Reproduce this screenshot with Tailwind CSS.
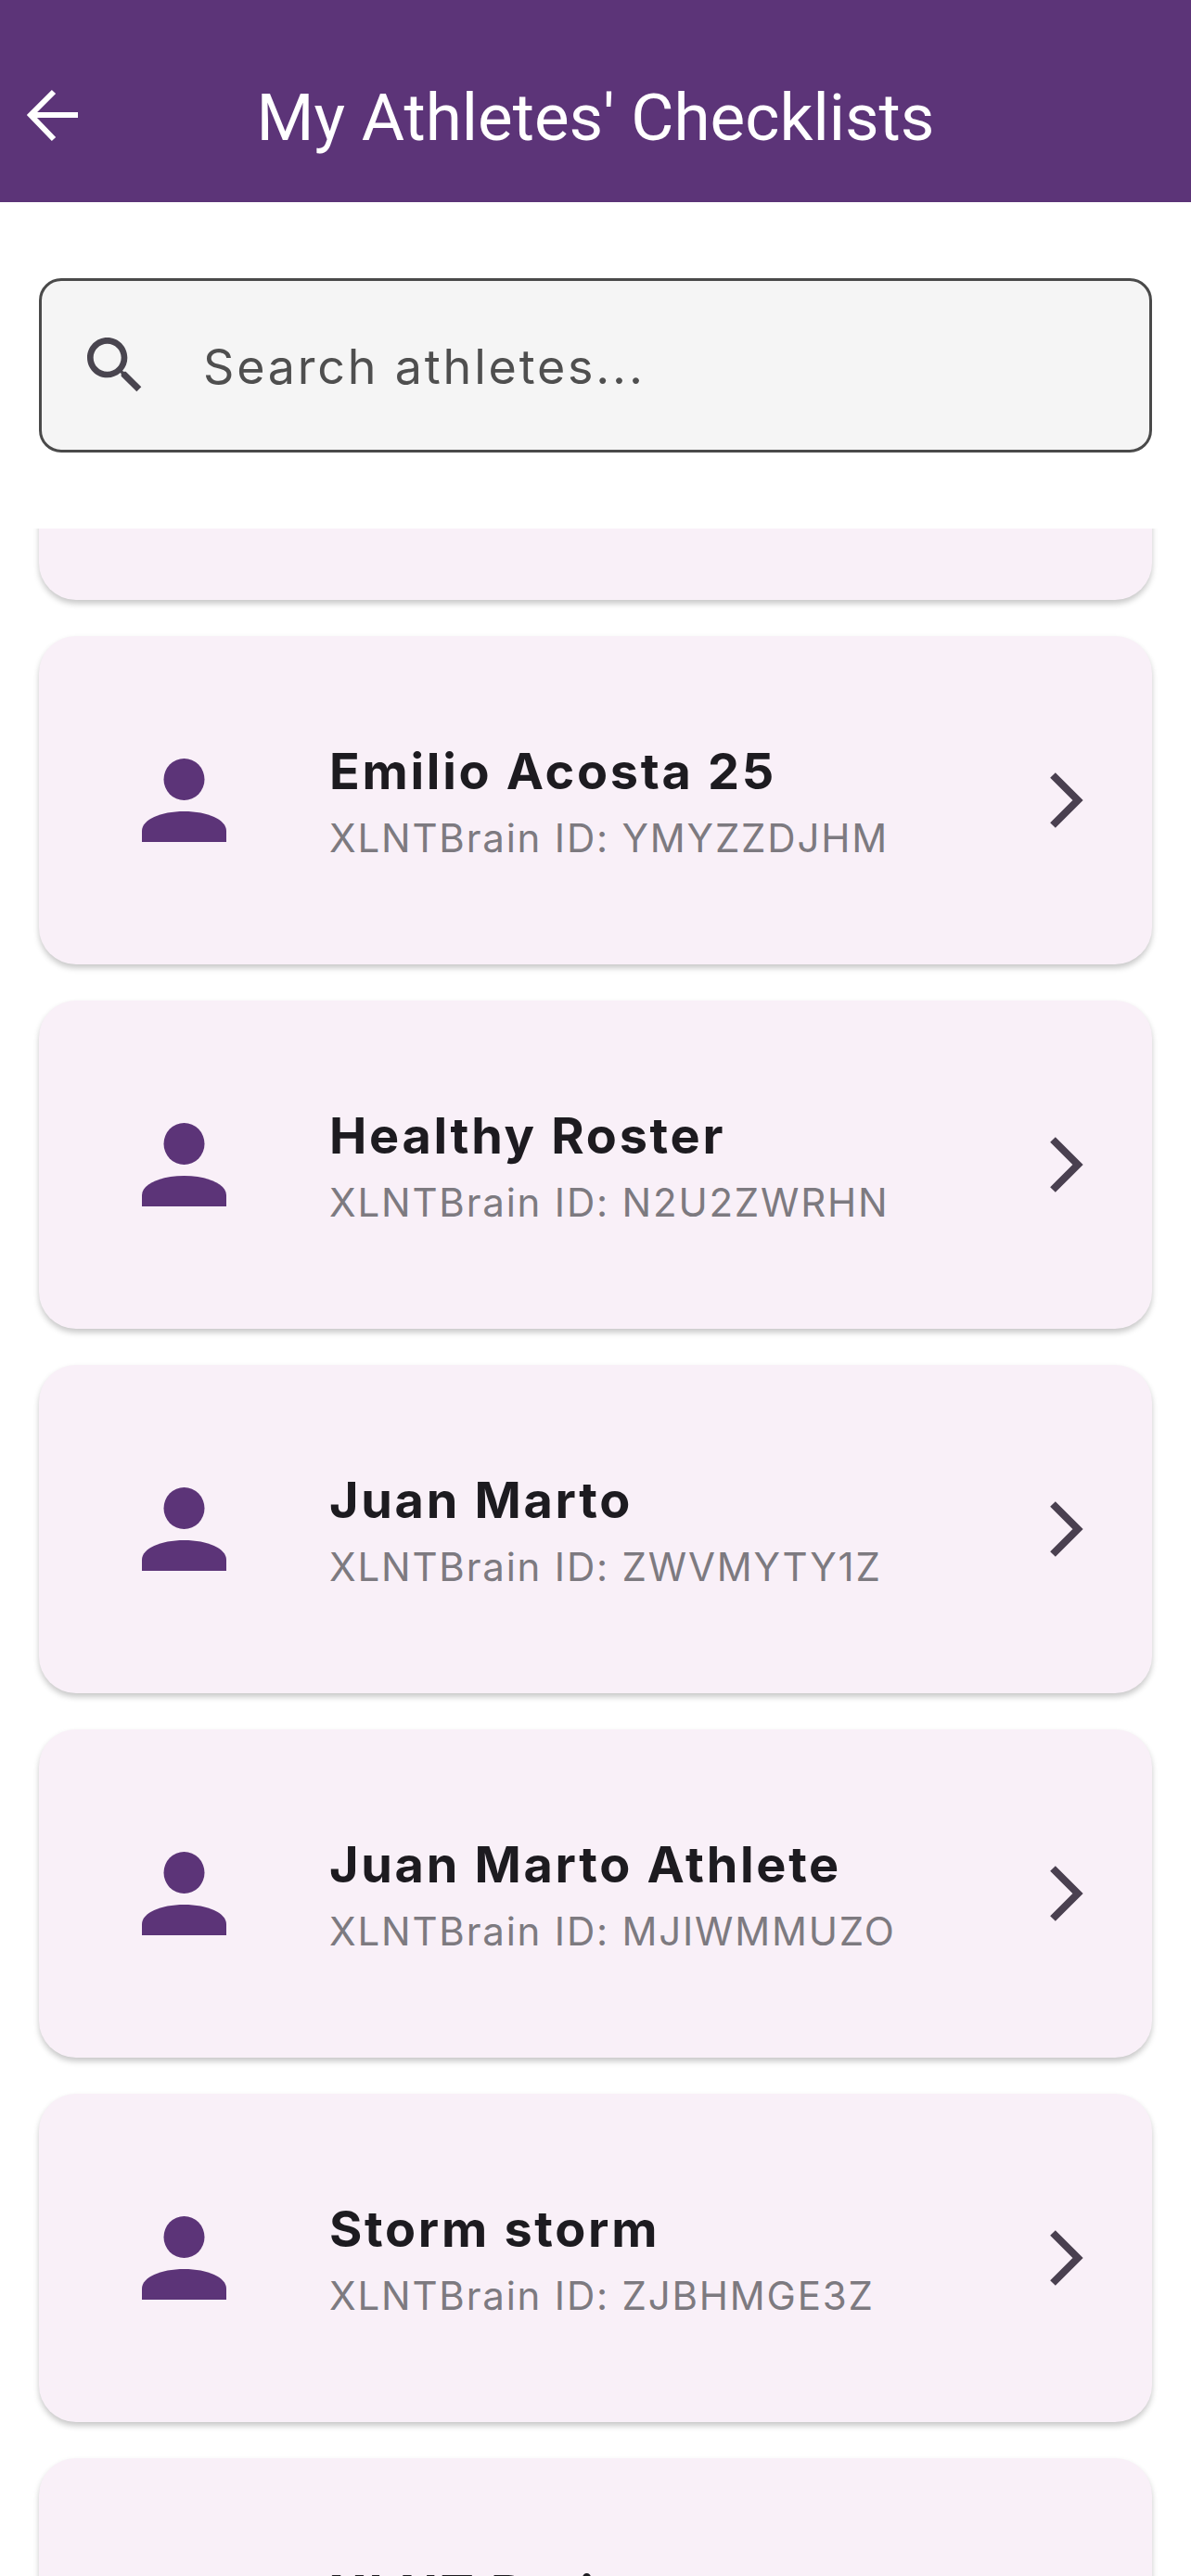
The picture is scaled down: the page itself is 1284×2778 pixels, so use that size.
<!DOCTYPE html>
<html lang="en">
<head>
    <meta charset="UTF-8">
    <meta name="viewport" content="width=device-width, initial-scale=1.0">
    <title>My Athletes' Checklists</title>
    <script src="https://cdn.jsdelivr.net/npm/@tailwindcss/browser@4"></script>
</head>
<body class="bg-white font-['Roboto',sans-serif]">
<div class="w-[1284px] h-[2778px] flex flex-col overflow-hidden bg-white">

    <!-- app bar -->
    <header class="h-[218px] shrink-0 bg-[#5c3478] flex items-center relative pt-[34px]">
        <svg class="absolute left-[17px] top-[84px] w-[80px] h-[80px]" viewBox="0 0 80 80" fill="none" stroke="#fff" stroke-width="6"><path d="M67 40H16M41 15L16 40l25 26"/></svg>
        <h1 class="w-full text-center text-white text-[71px] leading-none font-normal font-['Roboto',sans-serif]">My Athletes' Checklists</h1>
    </header>

    <!-- search -->
    <div class="px-[42px] pt-[82px] pb-[82px] shrink-0">
        <div class="h-[188px] rounded-[24px] border-[3px] border-[#4a4a4a] bg-[#f5f5f5] flex items-center">
            <svg class="ml-[39px] w-[80px] h-[80px] text-[#49454f]" viewBox="0 0 24 24" fill="currentColor"><path d="M15.5 14h-.79l-.28-.27C15.41 12.59 16 11.11 16 9.5 16 5.91 13.09 3 9.5 3S3 5.91 3 9.5 5.91 16 9.5 16c1.61 0 3.09-.59 4.23-1.57l.27.28v.79l5 4.99L20.49 19l-4.99-5zm-6 0C7.01 14 5 11.99 5 9.5S7.01 5 9.5 5 14 7.01 14 9.5 11.99 14 9.5 14z"/></svg>
            <span class="ml-[55px] mt-[4px] text-[52px] tracking-[2.8px] text-[#4f4f4f] font-['Inter',sans-serif]">Search athletes...</span>
        </div>
    </div>

    <!-- list, scrolled -->
    <div class="flex-1 overflow-hidden">
        <div class="-mt-[277px] px-[42px] flex flex-col gap-[39px] pb-[10px]">

            <div class="h-[354px] shrink-0 rounded-[40px] bg-[#f9f0f8] shadow-[0_4px_6px_rgba(0,0,0,0.22)]"></div>

            <div class="h-[354px] shrink-0 rounded-[40px] bg-[#f9f0f8] shadow-[0_4px_6px_rgba(0,0,0,0.22)] flex items-center">
                <svg class="ml-[111px] w-[91px] h-[90px] shrink-0" viewBox="0 0 91 90" fill="#5c3478"><ellipse cx="45.5" cy="22.5" rx="22" ry="22.5"/><path d="M0 90V78C0 66 20 57 45.5 57S91 66 91 78v12z"/></svg>
                <div class="ml-[111px] pt-[3px] flex-1 font-['Inter',sans-serif]">
                    <div class="text-[54px] leading-[64px] font-bold tracking-[2.7px] text-[#1d1b20]">Emilio Acosta 25</div>
                    <div class="mt-[14px] text-[42px] leading-[52px] tracking-[1.8px] text-[#7d7a80]">XLNTBrain ID: YMYZZDJHM</div>
                </div>
                <svg class="mr-[54px] w-[80px] h-[80px] shrink-0" viewBox="0 0 80 80" fill="none" stroke="#4a4050" stroke-width="8"><path d="M27 13l27 27-27 27"/></svg>
            </div>

            <div class="h-[354px] shrink-0 rounded-[40px] bg-[#f9f0f8] shadow-[0_4px_6px_rgba(0,0,0,0.22)] flex items-center">
                <svg class="ml-[111px] w-[91px] h-[90px] shrink-0" viewBox="0 0 91 90" fill="#5c3478"><ellipse cx="45.5" cy="22.5" rx="22" ry="22.5"/><path d="M0 90V78C0 66 20 57 45.5 57S91 66 91 78v12z"/></svg>
                <div class="ml-[111px] pt-[3px] flex-1 font-['Inter',sans-serif]">
                    <div class="text-[54px] leading-[64px] font-bold tracking-[2.7px] text-[#1d1b20]">Healthy Roster</div>
                    <div class="mt-[14px] text-[42px] leading-[52px] tracking-[1.8px] text-[#7d7a80]">XLNTBrain ID: N2U2ZWRHN</div>
                </div>
                <svg class="mr-[54px] w-[80px] h-[80px] shrink-0" viewBox="0 0 80 80" fill="none" stroke="#4a4050" stroke-width="8"><path d="M27 13l27 27-27 27"/></svg>
            </div>

            <div class="h-[354px] shrink-0 rounded-[40px] bg-[#f9f0f8] shadow-[0_4px_6px_rgba(0,0,0,0.22)] flex items-center">
                <svg class="ml-[111px] w-[91px] h-[90px] shrink-0" viewBox="0 0 91 90" fill="#5c3478"><ellipse cx="45.5" cy="22.5" rx="22" ry="22.5"/><path d="M0 90V78C0 66 20 57 45.5 57S91 66 91 78v12z"/></svg>
                <div class="ml-[111px] pt-[3px] flex-1 font-['Inter',sans-serif]">
                    <div class="text-[54px] leading-[64px] font-bold tracking-[2.7px] text-[#1d1b20]">Juan Marto</div>
                    <div class="mt-[14px] text-[42px] leading-[52px] tracking-[1.8px] text-[#7d7a80]">XLNTBrain ID: ZWVMYTY1Z</div>
                </div>
                <svg class="mr-[54px] w-[80px] h-[80px] shrink-0" viewBox="0 0 80 80" fill="none" stroke="#4a4050" stroke-width="8"><path d="M27 13l27 27-27 27"/></svg>
            </div>

            <div class="h-[354px] shrink-0 rounded-[40px] bg-[#f9f0f8] shadow-[0_4px_6px_rgba(0,0,0,0.22)] flex items-center">
                <svg class="ml-[111px] w-[91px] h-[90px] shrink-0" viewBox="0 0 91 90" fill="#5c3478"><ellipse cx="45.5" cy="22.5" rx="22" ry="22.5"/><path d="M0 90V78C0 66 20 57 45.5 57S91 66 91 78v12z"/></svg>
                <div class="ml-[111px] pt-[3px] flex-1 font-['Inter',sans-serif]">
                    <div class="text-[54px] leading-[64px] font-bold tracking-[2.7px] text-[#1d1b20]">Juan Marto Athlete</div>
                    <div class="mt-[14px] text-[42px] leading-[52px] tracking-[1.8px] text-[#7d7a80]">XLNTBrain ID: MJIWMMUZO</div>
                </div>
                <svg class="mr-[54px] w-[80px] h-[80px] shrink-0" viewBox="0 0 80 80" fill="none" stroke="#4a4050" stroke-width="8"><path d="M27 13l27 27-27 27"/></svg>
            </div>

            <div class="h-[354px] shrink-0 rounded-[40px] bg-[#f9f0f8] shadow-[0_4px_6px_rgba(0,0,0,0.22)] flex items-center">
                <svg class="ml-[111px] w-[91px] h-[90px] shrink-0" viewBox="0 0 91 90" fill="#5c3478"><ellipse cx="45.5" cy="22.5" rx="22" ry="22.5"/><path d="M0 90V78C0 66 20 57 45.5 57S91 66 91 78v12z"/></svg>
                <div class="ml-[111px] pt-[3px] flex-1 font-['Inter',sans-serif]">
                    <div class="text-[54px] leading-[64px] font-bold tracking-[2.7px] text-[#1d1b20]">Storm storm</div>
                    <div class="mt-[14px] text-[42px] leading-[52px] tracking-[1.8px] text-[#7d7a80]">XLNTBrain ID: ZJBHMGE3Z</div>
                </div>
                <svg class="mr-[54px] w-[80px] h-[80px] shrink-0" viewBox="0 0 80 80" fill="none" stroke="#4a4050" stroke-width="8"><path d="M27 13l27 27-27 27"/></svg>
            </div>

            <!-- next row, cut by the bottom of the screen -->
            <div class="h-[354px] shrink-0 rounded-[40px] bg-[#f9f0f8] shadow-[0_4px_6px_rgba(0,0,0,0.22)] flex items-center">
                <div class="ml-[313px] pt-[3px] flex-1 font-['Inter',sans-serif]">
                    <div class="text-[54px] leading-[64px] font-bold tracking-[2.7px] text-[#1d1b20]">XLNT Brain</div>
                    <div class="mt-[14px] h-[52px]"></div>
                </div>
            </div>

        </div>
    </div>
</div>
</body>
</html>
